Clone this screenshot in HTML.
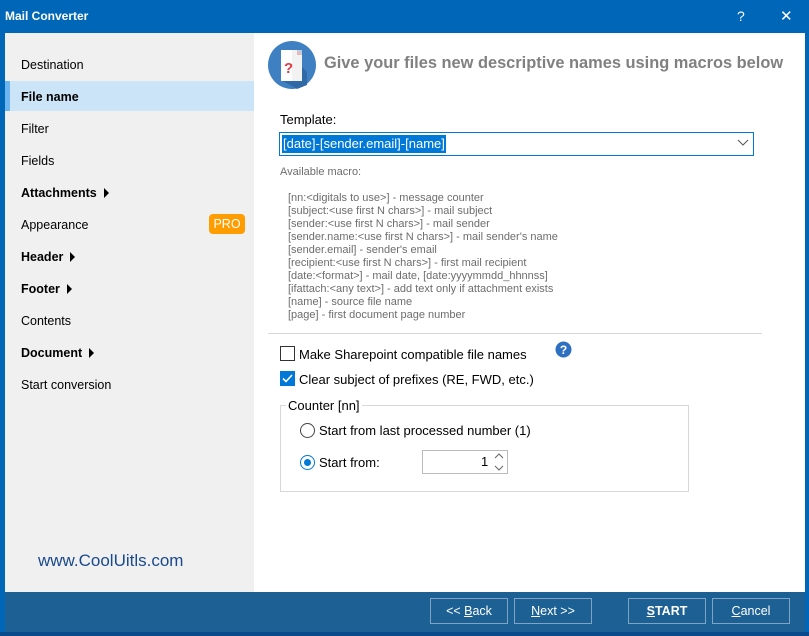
<!DOCTYPE html>
<html><head><style>
*{margin:0;padding:0;box-sizing:border-box}
body{width:809px;height:636px;background:#0067b8;font-family:"Liberation Sans",sans-serif;font-size:13px;color:#000;position:relative;overflow:hidden}
.a{position:absolute}
.side div.i{position:absolute;left:21px;font-size:12.5px}
.b{font-weight:bold}
.tri{display:inline-block;width:0;height:0;border-left:5px solid #000;border-top:5px solid transparent;border-bottom:5px solid transparent;margin-left:7px;vertical-align:-1px}
.mac{position:absolute;left:288px;font-size:11px;color:#6d6d6d;line-height:13px}
.btn{position:absolute;top:598px;height:26px;border:1px solid #7ea3c4;color:#fff;font-size:12.5px;text-align:center;line-height:24px}
</style></head><body>
<div class="a" style="left:5px;top:9px;color:#fff;font-weight:bold;font-size:12px">Mail Converter</div>
<div class="a" style="left:737px;top:8px;color:#fff;font-size:14px">?</div>
<div class="a" style="left:780px;top:7px;color:#fff;font-size:15px">✕</div>
<div class="a side" style="left:5px;top:33px;width:249px;height:559px;background:#f0f0f0">
<div class="a" style="left:0;top:48px;width:249px;height:30px;background:#cce4f7"></div>
<div class="a" style="left:0;top:48px;width:5px;height:30px;background:#6cb5f0"></div>
<div class="i" style="left:16px;top:25px">Destination</div>
<div class="i b" style="left:16px;top:57px">File name</div>
<div class="i" style="left:16px;top:89px">Filter</div>
<div class="i" style="left:16px;top:121px">Fields</div>
<div class="i b" style="left:16px;top:153px">Attachments<span class="tri"></span></div>
<div class="i" style="left:16px;top:185px">Appearance</div>
<div class="a" style="left:204px;top:181px;width:36px;height:20px;background:#ff9c00;border-radius:4px;color:#fff;font-size:12.5px;text-align:center;line-height:20px">PRO</div>
<div class="i b" style="left:16px;top:217px">Header<span class="tri"></span></div>
<div class="i b" style="left:16px;top:249px">Footer<span class="tri"></span></div>
<div class="i" style="left:16px;top:281px">Contents</div>
<div class="i b" style="left:16px;top:313px">Document<span class="tri"></span></div>
<div class="i" style="left:16px;top:345px">Start conversion</div>
<div class="a" style="left:33px;top:518px;color:#1a4a8c;font-size:17px">www.CoolUitls.com</div>
</div>
<div class="a" style="left:254px;top:33px;width:551px;height:559px;background:#fff"></div>
<svg class="a" style="left:267px;top:40px" width="50" height="50" viewBox="0 0 50 50">
<circle cx="25" cy="25" r="24" fill="#3e80c2"/>
<path d="M18 10 L40 32 L40 45 L30 49 L14 40Z" fill="#2f6aa6"/>
<path d="M14 10 H30 L35 15 V41 H14Z" fill="#fff"/>
<path d="M30 10 L35 15 H30Z" fill="#e03a45"/>
<rect x="25" y="10" width="10" height="31" fill="#ececec" opacity=".7"/>
<text x="17" y="33" font-family="Liberation Sans" font-weight="bold" font-size="15" fill="#e03a45">?</text>
</svg>
<div class="a" style="left:324px;top:54px;font-size:16.4px;font-weight:bold;color:#808080">Give your files new descriptive names using macros below</div>
<div class="a" style="left:280px;top:112px;font-size:13px">Template:</div>
<div class="a" style="left:279px;top:132px;width:475px;height:24px;border:1px solid #0078d7;background:#fff"></div>
<div class="a" style="left:282px;top:135px;height:18px;background:#0078d7;color:#fff;font-size:13px;line-height:18px;padding:0 1px">[date]-[sender.email]-[name]</div>
<svg class="a" style="left:737px;top:139px" width="12" height="8"><path d="M1 1 L6 6 L11 1" stroke="#555" fill="none"/></svg>
<div class="mac" style="left:280px;top:166px">Available macro:</div>
<div class="mac" style="top:192px">[nn:&lt;digitals to use&gt;] - message counter<br>[subject:&lt;use first N chars&gt;] - mail subject<br>[sender:&lt;use first N chars&gt;] - mail sender<br>[sender.name:&lt;use first N chars&gt;] - mail sender's name<br>[sender.email] - sender's email<br>[recipient:&lt;use first N chars&gt;] - first mail recipient<br>[date:&lt;format&gt;] - mail date, [date:yyyymmdd_hhnnss]<br>[ifattach:&lt;any text&gt;] - add text only if attachment exists<br>[name] - source file name<br>[page] - first document page number</div>
<div class="a" style="left:268px;top:333px;width:494px;height:1px;background:#d8d8d8"></div>
<div class="a" style="left:280px;top:346px;width:15px;height:15px;border:1px solid #333;background:#fff"></div>
<div class="a" style="left:299px;top:347px">Make Sharepoint compatible file names</div>
<svg class="a" style="left:555px;top:341px" width="17" height="17"><circle cx="8.5" cy="8.5" r="8" fill="#2d6fc0"/><text x="8.5" y="13" text-anchor="middle" font-family="Liberation Sans" font-weight="bold" font-size="12" fill="#fff">?</text></svg>
<div class="a" style="left:280px;top:371px;width:15px;height:15px;background:#0078d7"></div>
<svg class="a" style="left:280px;top:371px" width="15" height="15"><path d="M3 7.5 L6 10.5 L12 4" stroke="#fff" stroke-width="1.6" fill="none"/></svg>
<div class="a" style="left:299px;top:372px">Clear subject of prefixes (RE, FWD, etc.)</div>
<div class="a" style="left:280px;top:405px;width:409px;height:87px;border:1px solid #d8d8d8"></div>
<div class="a" style="left:286px;top:398px;background:#fff;padding:0 2px">Counter [nn]</div>
<div class="a" style="left:300px;top:423px;width:15px;height:15px;border:1px solid #444;border-radius:50%"></div>
<div class="a" style="left:319px;top:423px">Start from last processed number (1)</div>
<div class="a" style="left:300px;top:455px;width:15px;height:15px;border:1px solid #0078d7;border-radius:50%"></div>
<div class="a" style="left:304px;top:459px;width:7px;height:7px;background:#0078d7;border-radius:50%"></div>
<div class="a" style="left:319px;top:455px">Start from:</div>
<div class="a" style="left:422px;top:450px;width:86px;height:24px;border:1px solid #bbb"></div>
<div class="a" style="left:481px;top:454px">1</div>
<svg class="a" style="left:493px;top:452px" width="12" height="20"><path d="M2 6 L6 2 L10 6 M2 14 L6 18 L10 14" stroke="#666" fill="none"/></svg>
<div class="a" style="left:5px;top:592px;width:800px;height:40px;background:#1d6094"></div>
<div class="a" style="left:0;top:632px;width:809px;height:4px;background:#0b4a8a"></div>
<div class="btn" style="left:430px;width:78px">&lt;&lt; <u>B</u>ack</div>
<div class="btn" style="left:514px;width:78px"><u>N</u>ext &gt;&gt;</div>
<div class="btn b" style="left:628px;width:78px"><u>S</u>TART</div>
<div class="btn" style="left:712px;width:78px"><u>C</u>ancel</div>
</body></html>
